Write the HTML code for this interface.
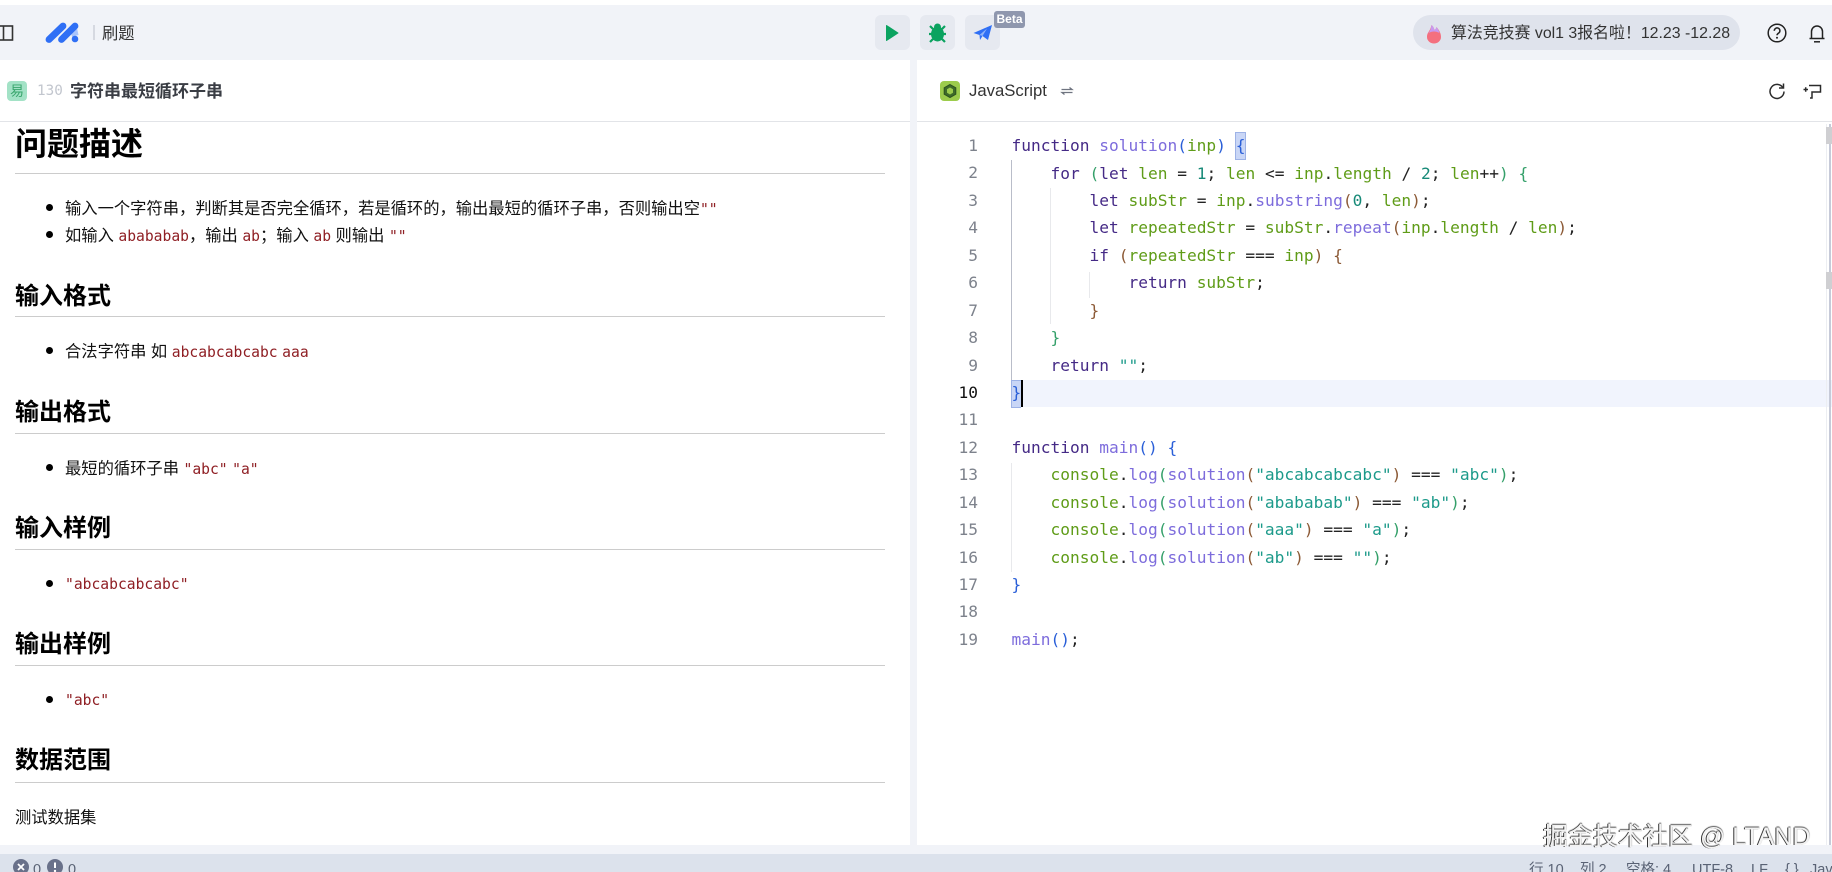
<!DOCTYPE html>
<html lang="zh">
<head>
<meta charset="utf-8">
<title>刷题</title>
<style>
html,body{margin:0;padding:0;width:1832px;height:872px;overflow:hidden;background:#fff}
body{position:relative;font-family:"Liberation Sans","Noto Sans CJK SC",sans-serif;color:#000}
.a{position:absolute}
.t{position:absolute;white-space:nowrap;line-height:30px}
svg{position:absolute;overflow:visible}
.hdr{left:0;top:5px;width:1832px;height:55px;background:#f1f3f8}
.btn{top:15px;width:35px;height:35px;background:#e6e9f0;border-radius:6px}
.h1,.h2{font-weight:700;left:15px;color:#000}
.h1{font-size:32px;line-height:40px}
.h2{font-size:24px}
.rule{left:15px;width:870px;height:1px;background:#ccc}
.li{left:65px;font-size:16.3px;color:#111}
.dot{left:46px;width:7px;height:7px;border-radius:50%;background:#000}
code{font-family:"DejaVu Sans Mono","Liberation Mono",monospace;font-size:14.67px;color:#8f1f24}
pre{margin:0;position:absolute;font-family:"DejaVu Sans Mono","Liberation Mono",monospace;font-size:16.2px;line-height:27.44px}
.k{color:#452a86}.f{color:#7d6cdc}.v{color:#5f9c18}.n{color:#178a78}.s{color:#1c9a8a}
.b1{color:#2a5fd8}.b2{color:#35a06a}.b3{color:#8c5a36}.o{color:#222}
.st{top:855px;font-size:14.5px;color:#5a6375;line-height:30px}
</style>
</head>
<body>
<div class="a hdr"></div>

<!-- side toggle -->
<svg style="left:0;top:0" width="20" height="60"><rect x="-3" y="26" width="15.5" height="14" fill="none" stroke="#333" stroke-width="1.6"/><path d="M3.5 26v14" stroke="#333" stroke-width="1.6"/></svg>
<!-- logo -->
<svg style="left:44px;top:20px" width="36" height="26"><path d="M26 9 33 8 34.500 15 28 17Z" fill="#a9c4fb"/><path d="M5 19.500 19 6" stroke="#2f6ff5" stroke-width="6.800" stroke-linecap="round"/><path d="M17.500 19.500 31 6" stroke="#2f6ff5" stroke-width="6.800" stroke-linecap="round"/><circle cx="31" cy="19" r="3.300" fill="#2f6ff5"/></svg>
<div class="a" style="left:93px;top:25px;width:2px;height:15px;background:#d6d9e1"></div>
<div class="t" style="left:102px;top:19px;font-size:16.3px;color:#333">刷题</div>

<!-- actions -->
<div class="a btn" style="left:875px"></div>
<div class="a btn" style="left:920px"></div>
<div class="a btn" style="left:965px"></div>
<svg style="left:875px;top:15px" width="35" height="35"><path d="M11.500 10.500 23 18 11.500 25.500Z" fill="#0ba360" stroke="#0ba360" stroke-width="1" stroke-linejoin="round"/></svg>
<svg style="left:920px;top:15px" width="35" height="35"><ellipse cx="17.500" cy="19" rx="6.500" ry="7.500" fill="#0ba360"/><circle cx="17.500" cy="12" r="3.500" fill="#0ba360"/><path d="M10 11l3 3M25 11l-3 3M9 19h3M26 19h-3M10 27l3-3M25 27l-3-3" stroke="#0ba360" stroke-width="2.200" fill="none"/></svg>
<svg style="left:965px;top:15px" width="35" height="35"><path d="M8.500 18 27 10 23 25 17.500 21 15 25 14.500 20Z" fill="#2f6ff5"/><path d="M14.500 20 22 13.500 17.500 21" fill="#8fb2fa"/></svg>
<div class="a" style="left:994px;top:11px;width:31px;height:17px;background:#8f97ae;border-radius:3px;color:#fff;font-size:12px;font-weight:700;line-height:17px;text-align:center">Beta</div>

<!-- pill -->
<div class="a" style="left:1413px;top:15px;width:327px;height:35px;border-radius:18px;background:#dfe3ec"></div>
<svg style="left:1424px;top:24px" width="20" height="20"><path d="M3 13C3 8 6 8 7.500 1 10 3 10 5 10.500 6 12 5 12.500 3.500 12.500 3 15 6 17 9 17 13A7 6.500 0 0 1 3 13Z" fill="#f4707f"/><path d="M7.500 1C10 3 10 5 10.500 6 12 5 12.500 3.500 12.500 3 14 5 15 7 15.500 9 12 7 8 7 4.500 9 6 7 7 5 7.500 1Z" fill="#c79af0"/></svg>
<div class="t" style="left:1451px;top:19px;font-size:15.9px;color:#333">算法竞技赛 vol1 3报名啦！12.23 -12.28</div>
<svg style="left:1766px;top:22px" width="22" height="22"><circle cx="11" cy="11" r="8.800" fill="none" stroke="#222" stroke-width="1.500"/><path d="M8.300 8.800a2.800 2.800 0 1 1 4.300 2.300c-1 .7-1.600 1.100-1.600 2.200" fill="none" stroke="#222" stroke-width="1.500"/><circle cx="11" cy="15.800" r="1" fill="#222"/></svg>
<svg style="left:1806px;top:22px" width="22" height="22"><path d="M3.500 16.500h15M5.500 16.500V9.500a5.500 5.500 0 0 1 11 0v7" fill="none" stroke="#222" stroke-width="1.500"/><path d="M8 19.800h6" stroke="#222" stroke-width="1.500"/></svg>

<!-- gutter / background -->
<div class="a" style="left:910px;top:60px;width:7px;height:785px;background:#f1f3f8"></div>
<div class="a" style="left:0;top:845px;width:1832px;height:9px;background:#f1f3f8"></div>
<div class="a" style="left:0;top:854px;width:1832px;height:18px;background:#dce2ec"></div>
<div class="a" style="left:0;top:121px;width:910px;height:1px;background:#e2e4e8"></div>
<div class="a" style="left:917px;top:121px;width:915px;height:1px;background:#e2e4e8"></div>

<!-- left header -->
<div class="a" style="left:7px;top:81px;width:20px;height:20px;border-radius:4px;background:#a3e2c6;color:#3aa66e;font-size:14px;line-height:20px;text-align:center">易</div>
<div class="t" style="left:37px;top:76px;font-family:'DejaVu Sans Mono',monospace;font-size:14.3px;color:#c2c6ce">130</div>
<div class="t" style="left:70px;top:77px;font-size:17px;font-weight:700;color:#3a3d44">字符串最短循环子串</div>

<!-- right header -->
<div class="a" style="left:940px;top:81px;width:20px;height:20px;border-radius:4px;background:#9ccc4c"></div>
<svg style="left:940px;top:81px" width="20" height="20"><path d="M10 3.500 15.800 6.800V13.200L10 16.500 4.200 13.200V6.800Z" fill="#3e6b28" stroke="#2c5220" stroke-width="1"/><path d="M10 6.500 13 8.200V11.800L10 13.500 7 11.800V8.200Z" fill="#9ccc4c"/></svg>
<div class="t" style="left:969px;top:76px;font-size:16.700px;color:#333">JavaScript</div>
<svg style="left:1060px;top:84px" width="14" height="14"><path d="M1.500 5.500H12L9.500 3.500M12.500 8.500H2L4.500 10.500" fill="none" stroke="#6f7480" stroke-width="1.300"/></svg>
<svg style="left:1767px;top:81px" width="20" height="20"><path d="M15.800 6.500A7 7 0 1 0 17 10.500" fill="none" stroke="#2b2b2b" stroke-width="1.500"/><path d="M16.500 2.500V7H12" fill="none" stroke="#2b2b2b" stroke-width="1.500"/></svg>
<svg style="left:1802px;top:81px" width="22" height="20"><path d="M7 4.500H18.500V11H10V17H8" fill="none" stroke="#2b2b2b" stroke-width="1.500"/><path d="M1.500 8.500H6M3.700 6.300V10.700" stroke="#2b2b2b" stroke-width="1.500"/></svg>

<!-- description -->
<div class="a" style="left:0;top:122px;width:910px;height:723px;overflow:hidden">
<div class="t h1" style="top:2px;line-height:40px">问题描述</div>
</div>
<div class="a rule" style="top:173px"></div>
<div class="a dot" style="top:204px"></div>
<div class="t li" style="top:194px">输入一个字符串，判断其是否完全循环，若是循环的，输出最短的循环子串，否则输出空<code>""</code></div>
<div class="a dot" style="top:231px"></div>
<div class="t li" style="top:221px">如输入 <code>abababab</code>，输出 <code>ab</code>；输入 <code>ab</code> 则输出 <code>""</code></div>

<div class="t h2" style="top:282px">输入格式</div>
<div class="a rule" style="top:316px"></div>
<div class="a dot" style="top:347px"></div>
<div class="t li" style="top:337px">合法字符串 如 <code>abcabcabcabc</code> <code>aaa</code></div>

<div class="t h2" style="top:398px">输出格式</div>
<div class="a rule" style="top:433px"></div>
<div class="a dot" style="top:464px"></div>
<div class="t li" style="top:454px">最短的循环子串 <code>"abc"</code> <code>"a"</code></div>

<div class="t h2" style="top:514px">输入样例</div>
<div class="a rule" style="top:549px"></div>
<div class="a dot" style="top:580px"></div>
<div class="t li" style="top:569px"><code>"abcabcabcabc"</code></div>

<div class="t h2" style="top:630px">输出样例</div>
<div class="a rule" style="top:665px"></div>
<div class="a dot" style="top:696px"></div>
<div class="t li" style="top:685px"><code>"abc"</code></div>

<div class="t h2" style="top:746px">数据范围</div>
<div class="a rule" style="top:782px"></div>
<div class="t" style="left:15px;top:803px;font-size:16.300px;color:#111">测试数据集</div>

<!-- editor decorations -->
<div class="a" style="left:1011px;top:380px;width:821px;height:27px;background:#f1f4fd"></div>
<div class="a" style="left:1235px;top:132px;width:9px;height:26px;background:#c9d6f6;border:1px solid #9db2e6"></div>
<div class="a" style="left:1011px;top:380px;width:9px;height:26px;background:#c9d6f6;border:1px solid #9db2e6;border-right:0"></div>
<div class="a" style="left:1021px;top:380px;width:2px;height:27px;background:#000"></div>
<div class="a" style="left:1011px;top:160px;width:1px;height:220px;background:#b9bdc9"></div>
<div class="a" style="left:1050px;top:188px;width:1px;height:136px;background:#e8e9ec"></div>
<div class="a" style="left:1089px;top:272px;width:1px;height:26px;background:#e8e9ec"></div>
<div class="a" style="left:1011px;top:463px;width:1px;height:109px;background:#e8e9ec"></div>

<!-- line numbers -->
<pre style="left:931px;top:132px;width:47px;text-align:right;color:#7d828c">1
2
3
4
5
6
7
8
9
<span style="color:#111">10</span>
11
12
13
14
15
16
17
18
19</pre>

<!-- code -->
<pre class="o" style="left:1011.500px;top:132.100px"><span class="k">function</span> <span class="f">solution</span><span class="b1">(</span><span class="v">inp</span><span class="b1">)</span> <span class="b1">{</span>
    <span class="k">for</span> <span class="b2">(</span><span class="k">let</span> <span class="v">len</span> = <span class="n">1</span>; <span class="v">len</span> &lt;= <span class="v">inp</span>.<span class="v">length</span> / <span class="n">2</span>; <span class="v">len</span>++<span class="b2">)</span> <span class="b2">{</span>
        <span class="k">let</span> <span class="v">subStr</span> = <span class="v">inp</span>.<span class="f">substring</span><span class="b3">(</span><span class="n">0</span>, <span class="v">len</span><span class="b3">)</span>;
        <span class="k">let</span> <span class="v">repeatedStr</span> = <span class="v">subStr</span>.<span class="f">repeat</span><span class="b3">(</span><span class="v">inp</span>.<span class="v">length</span> / <span class="v">len</span><span class="b3">)</span>;
        <span class="k">if</span> <span class="b3">(</span><span class="v">repeatedStr</span> === <span class="v">inp</span><span class="b3">)</span> <span class="b3">{</span>
            <span class="k">return</span> <span class="v">subStr</span>;
        <span class="b3">}</span>
    <span class="b2">}</span>
    <span class="k">return</span> <span class="s">""</span>;
<span class="b1">}</span>

<span class="k">function</span> <span class="f">main</span><span class="b1">()</span> <span class="b1">{</span>
    <span class="v">console</span>.<span class="f">log</span><span class="b2">(</span><span class="f">solution</span><span class="b3">(</span><span class="s">"abcabcabcabc"</span><span class="b3">)</span> === <span class="s">"abc"</span><span class="b2">)</span>;
    <span class="v">console</span>.<span class="f">log</span><span class="b2">(</span><span class="f">solution</span><span class="b3">(</span><span class="s">"abababab"</span><span class="b3">)</span> === <span class="s">"ab"</span><span class="b2">)</span>;
    <span class="v">console</span>.<span class="f">log</span><span class="b2">(</span><span class="f">solution</span><span class="b3">(</span><span class="s">"aaa"</span><span class="b3">)</span> === <span class="s">"a"</span><span class="b2">)</span>;
    <span class="v">console</span>.<span class="f">log</span><span class="b2">(</span><span class="f">solution</span><span class="b3">(</span><span class="s">"ab"</span><span class="b3">)</span> === <span class="s">""</span><span class="b2">)</span>;
<span class="b1">}</span>

<span class="f">main</span><span class="b1">()</span>;</pre>

<!-- scrollbar -->
<div class="a" style="left:1826px;top:124px;width:1px;height:721px;background:#eceef2"></div>
<div class="a" style="left:1829px;top:124px;width:2px;height:721px;background:#c6cad8"></div>
<div class="a" style="left:1826px;top:127px;width:6px;height:17px;background:#cfcfd2"></div>
<div class="a" style="left:1826px;top:272px;width:6px;height:17px;background:#cfcfd2"></div>

<!-- status bar -->
<svg style="left:12px;top:859px" width="18" height="18"><circle cx="9" cy="8" r="8" fill="#69718a"/><path d="M6 5l6 6M12 5l-6 6" stroke="#fff" stroke-width="1.800"/></svg>
<div class="t st" style="left:33px">0</div>
<svg style="left:46px;top:859px" width="18" height="18"><circle cx="9" cy="8" r="8" fill="#69718a"/><path d="M9 3.500v5.500" stroke="#fff" stroke-width="2"/><circle cx="9" cy="12" r="1.200" fill="#fff"/></svg>
<div class="t st" style="left:68px">0</div>
<div class="t st" style="left:1529px">行 10</div>
<div class="t st" style="left:1580px">列 2</div>
<div class="t st" style="left:1626px">空格: 4</div>
<div class="t st" style="left:1692px">UTF-8</div>
<div class="t st" style="left:1751px">LF</div>
<div class="t st" style="left:1785px">{ }</div>
<div class="t st" style="left:1810px">JavaScript</div>

<!-- watermark -->
<div class="t" style="left:1543px;top:822px;font-size:25px;color:#f2f2f2;text-shadow:-1px 0 0 #333,0 -1px 1px #555">掘金技术社区 @ LTAND</div>
</body>
</html>
